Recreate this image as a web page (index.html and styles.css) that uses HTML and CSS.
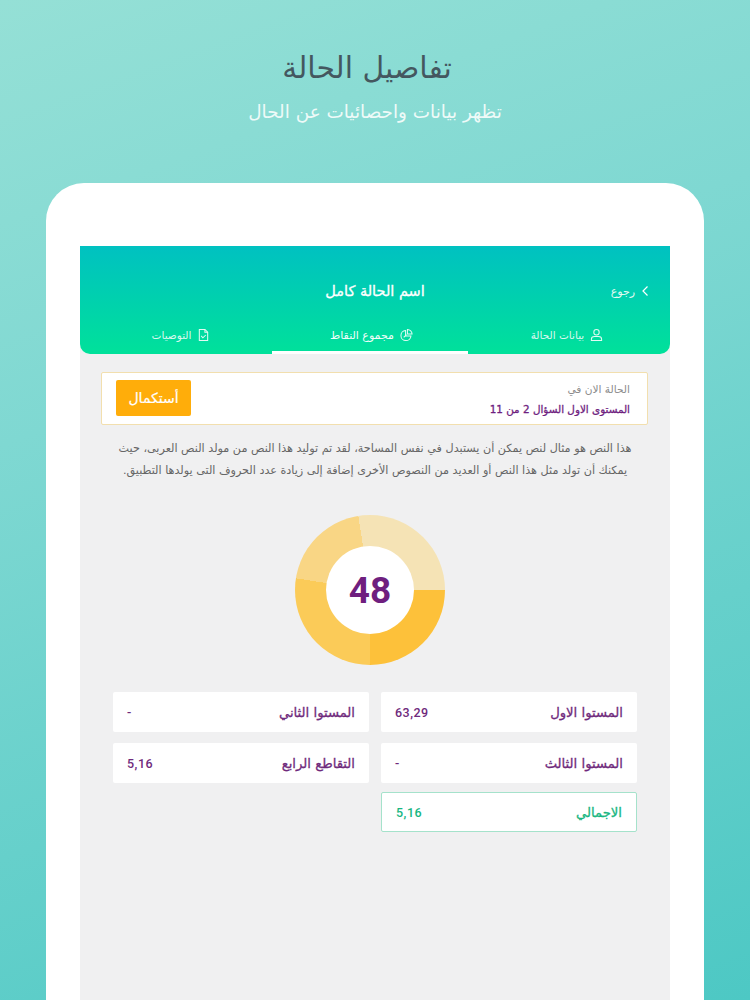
FILE: index.html
```html
<!DOCTYPE html>
<html lang="ar" dir="rtl">
<head>
<meta charset="utf-8">
<title>تفاصيل الحالة</title>
<link rel="stylesheet" href="styles.css">
</head>
<body>
<div class="page">
  <header class="hero">
    <h1>تفاصيل الحالة</h1>
    <p>تظهر بيانات واحصائيات عن الحال</p>
  </header>
  <div class="tablet">
    <main class="screen">
      <div class="appbar">
        <div class="topline">
          <div class="back">
            <svg class="chev" viewBox="0 0 10 14"><path d="M7.5 2.5L3 7l4.5 4.5"/></svg>
            <span>رجوع</span>
          </div>
          <div class="case-name">اسم الحالة كامل</div>
          <div class="spacer"></div>
        </div>
        <nav class="tabs">
          <div class="tab first">
            <svg viewBox="0 0 14 14"><circle cx="7" cy="4" r="2.9"/><path d="M1.5 13v-1.4C1.5 9.7 3 8.7 4.8 8.7h4.4c1.8 0 3.3 1 3.3 2.9V13z"/></svg>
            <span>بيانات الحالة</span>
          </div>
          <div class="tab active">
            <svg viewBox="0 0 14 14"><path d="M6 2.2a5.4 5.4 0 1 0 5.8 5.8H6z"/><path d="M8 1a5 5 0 0 1 5 5H8z"/><path d="M4 9.5l3-3"/></svg>
            <span>مجموع النقاط</span>
          </div>
          <div class="tab last">
            <svg viewBox="0 0 14 14"><path d="M2.5 1h6l3 3v9h-9z"/><path d="M8.5 1v3h3"/><path d="M4.5 8l1.8 2L9.5 7"/></svg>
            <span>التوصيات</span>
          </div>
        </nav>
      </div>

      <section class="status">
        <div class="status-text">
          <div class="status-label">الحالة الان في</div>
          <div class="status-value">المستوى الاول السؤال 2 من 11</div>
        </div>
        <button class="resume">أستكمال</button>
      </section>

      <p class="desc">هذا النص هو مثال لنص يمكن أن يستبدل في نفس المساحة، لقد تم توليد هذا النص من مولد النص العربى، حيث يمكنك أن تولد مثل هذا النص أو العديد من النصوص الأخرى إضافة إلى زيادة عدد الحروف التى يولدها التطبيق.</p>

      <div class="donut"><div class="hole">48</div></div>

      <div class="scores">
        <div class="score"><span>المستوا الاول</span><b>63,29</b></div>
        <div class="score"><span>المستوا الثاني</span><b>-</b></div>
        <div class="score"><span>المستوا الثالث</span><b>-</b></div>
        <div class="score"><span>التقاطع الرابع</span><b>5,16</b></div>
        <div class="score total"><span>الاجمالي</span><b>5,16</b></div>
      </div>
    </main>
  </div>
</div>
</body>
</html>
```
FILE: styles.css
```css
* { box-sizing: border-box; }
html, body { margin: 0; height: 100%; }
body { overflow: hidden; font-family: "DejaVu Sans", "Noto Sans", sans-serif; }
.page {
  width: 750px; height: 1000px; overflow: hidden;
  background: linear-gradient(160deg, #95e0d6 0%, #7fd8d2 35%, #4dc8c4 100%);
  display: flex; flex-direction: column; align-items: center;
}
.hero { height: 183px; padding-top: 48px; text-align: center; }
.hero h1 { margin: 0; padding-right: 16px; font-size: 29.8px; line-height: 40px; font-weight: 400; color: #44575f; }
.hero p { margin: 9px 0 0; font-size: 18.4px; line-height: 30px; color: #eefaf8; }
.tablet {
  width: 658px; height: 817px; background: #fff;
  border-radius: 38px 38px 0 0; padding: 63px 34px 0;
}
.screen { height: 754px; background: #f0f0f1; }
.appbar {
  height: 108px; border-radius: 0 0 10px 10px;
  background: linear-gradient(180deg, #00c1c1 0%, #00e19a 100%);
  display: flex; flex-direction: column; color: #fff;
}
.topline { display: flex; align-items: center; justify-content: space-between; height: 76px; padding: 14px 20px 0; }
.back { width: 120px; display: flex; align-items: center; gap: 5px; font-size: 11px; color: #e6fbf4; }
.chev { width: 10px; height: 14px; fill: none; stroke: #fff; stroke-width: 1.2; }
.case-name { font-size: 14.5px; font-weight: 400; -webkit-text-stroke: .3px #fff; }
.spacer { width: 120px; }
.tabs { flex: 1; display: grid; grid-template-columns: 202px 196px 192px; }
.tab {
  display: flex; align-items: center; justify-content: center; gap: 6px;
  padding-bottom: 6px; font-size: 10.5px; color: #d8f8ee;
}
.tab svg { width: 13px; height: 14px; fill: none; stroke: #e4fbf4; stroke-width: 1.1; }
.tab.first { padding-right: 4px; }
.tab.last { padding-left: 10px; }
.tab.active { border-bottom: 3px solid #fff; padding: 0 0 3px 3px; color: #f0fdf9; font-size: 11px; }
.status {
  margin: 18px 22px 0 21px; height: 53px; background: #fff;
  border: 1px solid #f2dfae; border-radius: 2px;
  display: flex; align-items: center; justify-content: space-between;
  padding: 0 17px 0 14px;
}
.status-label { font-size: 10.6px; line-height: 14px; color: #8c8c8c; }
.status-value { margin-top: 6px; font-size: 10.4px; line-height: 14px; color: #6f1f7f; -webkit-text-stroke: .3px #6f1f7f; }
.resume {
  width: 75px; height: 36px; margin-bottom: 2px; border: 0; border-radius: 2px; padding: 0;
  background: #ffad0a; color: #fff; font: 400 14px "DejaVu Sans", sans-serif; -webkit-text-stroke: .2px #fff;
}
.desc {
  margin: 13px 28px 0 28px; font-size: 11.2px; line-height: 22px; color: #666; text-align: center;
}
.donut {
  width: 150px; height: 150px; margin: 33px 225px 0 215px; border-radius: 50%;
  background: conic-gradient(#f5e3b5 0deg 90deg, #fdc13a 90deg 180deg, #fbcb58 180deg 279deg, #f9d685 279deg 351deg, #f5e3b5 351deg);
  display: flex; align-items: center; justify-content: center;
}
.hole {
  width: 88px; height: 88px; border-radius: 50%; background: #fff;
  display: flex; align-items: center; justify-content: center;
  font: 700 37px/1 "Roboto", sans-serif; color: #6f1f7f;
}
.scores {
  margin: 27px 33px 0; display: grid; grid-template-columns: 256px 256px; gap: 11px 12px;
}
.score {
  height: 40px; background: #fff; border-radius: 2px;
  display: flex; align-items: center; justify-content: space-between;
  padding: 0 14px; font-size: 13.2px; color: #6f2a7c;
}
.score span { -webkit-text-stroke: .3px currentColor; }
.score b { font: 500 12.5px "Roboto", sans-serif; direction: ltr; width: 70px; text-align: left; letter-spacing: .5px; }
.score.total { border: 1px solid #a5e2cb; color: #17b681; margin-top: -2px; }
```
